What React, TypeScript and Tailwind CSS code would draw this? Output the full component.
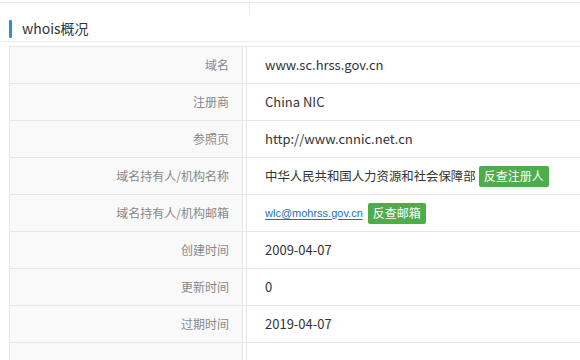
import React from "react";

type Row = { label: string; value: React.ReactNode };

const font = { fontFamily: '"Noto Sans CJK SC", "Noto Sans", sans-serif' };

function GreenButton({ children }: { children: React.ReactNode }) {
  return (
    <span className="inline-flex h-[21px] items-center rounded-[2px] bg-[#4dad4a] px-[5px] text-[12px] leading-none text-white">
      {children}
    </span>
  );
}

const rows: Row[] = [
  { label: "域名", value: "www.sc.hrss.gov.cn" },
  { label: "注册商", value: "China NIC" },
  { label: "参照页", value: "http://www.cnnic.net.cn" },
  {
    label: "域名持有人/机构名称",
    value: (
      <span className="flex items-center gap-[3px]">
        <span className="text-[12.4px]">中华人民共和国人力资源和社会保障部</span>
        <GreenButton>反查注册人</GreenButton>
      </span>
    ),
  },
  {
    label: "域名持有人/机构邮箱",
    value: (
      <span className="flex items-center gap-[5px]">
        <a
          className="text-[11px] text-[#2a6db3] underline underline-offset-2"
          style={{ fontFamily: '"Liberation Sans", Arial, sans-serif' }}
        >
          wlc@mohrss.gov.cn
        </a>
        <GreenButton>反查邮箱</GreenButton>
      </span>
    ),
  },
  { label: "创建时间", value: "2009-04-07" },
  { label: "更新时间", value: "0" },
  { label: "过期时间", value: "2019-04-07" },
  { label: "", value: "" },
];

export default function App() {
  return (
    <div className="h-[360px] w-[580px] overflow-hidden bg-white" style={font}>
      {/* tab strip edge */}
      <div className="mt-[2px] flex h-[14px] border-t border-[#e9e9e9]">
        <div className="w-[250px] border-r border-[#ececec]" />
        <div className="flex-1" />
      </div>
      {/* section title */}
      <div className="flex h-[26px] items-center border-b border-[#ececec] pl-[9px]">
        <span className="h-[18px] w-[3px] rounded-[1px] bg-[#2b90d9]" />
        <span className="ml-[10px] text-[14px] text-[#333]">whois概况</span>
      </div>
      {/* details table */}
      <div className="ml-[9px] mt-[4px] w-[600px] border-l border-t border-[#e6e6e6]">
        {rows.map((r, i) => (
          <div key={i} className="flex h-[37px] border-b border-[#e6e6e6]">
            <div className="flex w-[233px] items-center justify-end border-r border-[#e6e6e6] bg-[#f9f9f9] pr-[13px] text-[12px] text-[#888]">
              {r.label}
            </div>
            <div className="w-[3px]" />
            <div className="flex flex-1 items-center border-l border-[#e6e6e6] pl-[18px] text-[13px] text-[#333]">
              {r.value}
            </div>
          </div>
        ))}
      </div>
    </div>
  );
}
